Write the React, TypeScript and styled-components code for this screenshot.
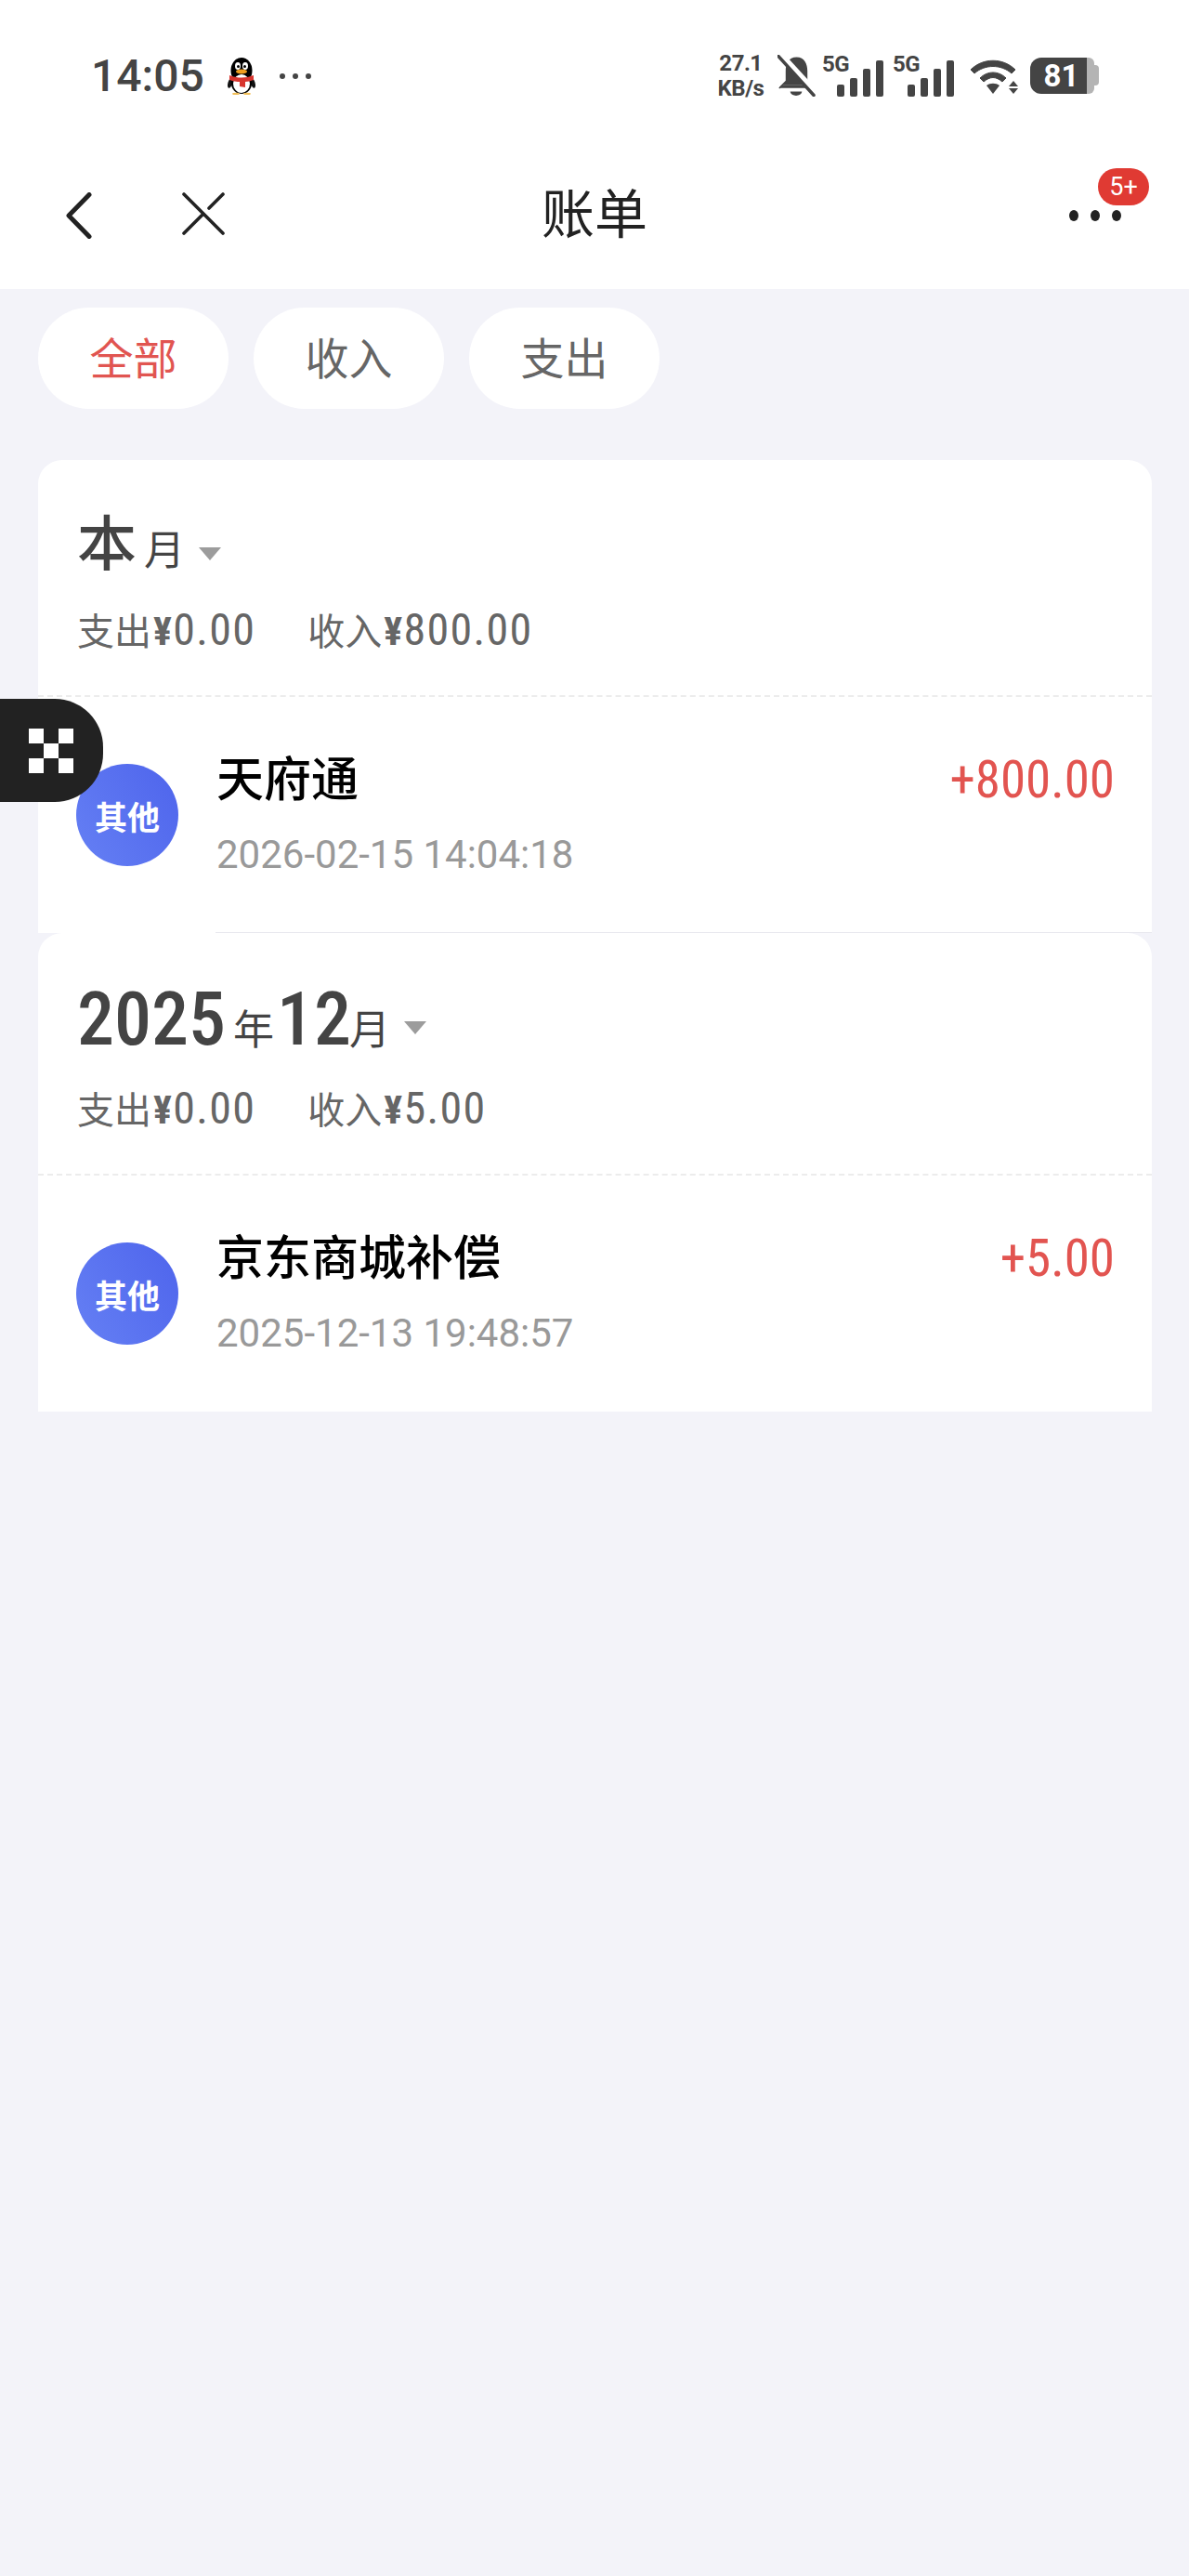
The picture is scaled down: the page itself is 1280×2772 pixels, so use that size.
import React from 'react';
import styled, { createGlobalStyle } from 'styled-components';

const FONT = `Roboto, "Noto Sans CJK SC", sans-serif`;

const GlobalStyle = createGlobalStyle`
  html, body {
    margin: 0;
    padding: 0;
    background: #f3f3f9;
  }
  * {
    box-sizing: border-box;
  }
`;

const Page = styled.div`
  position: relative;
  width: 1280px;
  min-height: 2772px;
  background: #f3f3f9;
  font-family: ${FONT};
  overflow: hidden;
`;

const Header = styled.header`
  background: #fff;
`;

const StatusBar = styled.div`
  height: 151px;
  padding: 12px 97px 0 98px;
  display: flex;
  align-items: center;
  justify-content: space-between;
`;

const StatusLeft = styled.div`
  display: flex;
  align-items: center;
`;

const Time = styled.span`
  font-size: 48px;
  font-weight: 500;
  color: #444;
  line-height: 1;
  margin-right: 24px;
`;

const MoreDots = styled.span`
  display: flex;
  gap: 8px;
  margin-left: 25px;

  i {
    width: 6px;
    height: 6px;
    border-radius: 50%;
    background: #444;
  }
`;

const StatusRight = styled.div`
  display: flex;
  align-items: center;
`;

const Speed = styled.div`
  width: 53px;
  display: flex;
  flex-direction: column;
  align-items: center;
  color: #444;
  font-weight: 700;
  font-size: 24px;
  line-height: 27px;
  margin-right: 13px;
  letter-spacing: -0.5px;
`;

const SpeedUnit = styled.span`
  font-size: 24px;
`;

const Signal = styled.div`
  position: relative;
  width: 66px;
  height: 44px;
  margin-left: 7px;
  display: flex;
  align-items: flex-end;
  justify-content: flex-end;
  gap: 6px;

  & + & {
    margin-left: 10px;
  }
`;

const SignalTag = styled.span`
  position: absolute;
  left: 0;
  top: -1px;
  font-size: 24px;
  line-height: 20px;
  font-weight: 700;
  color: #444;
  letter-spacing: -0.5px;
`;

const Bar = styled.i<{ $h: number }>`
  width: 8px;
  height: ${({ $h }) => $h}px;
  border-radius: 2px;
  background: #444;
`;

const WifiSvg = styled.svg`
  margin-left: 16px;
`;

const Battery = styled.div`
  width: 74px;
  height: 39px;
  margin-left: 12px;
  display: flex;
`;

const BatteryFill = styled.div`
  width: 61px;
  height: 39px;
  background: #444;
  border-radius: 12px 0 0 12px;
  color: #fff;
  font-size: 33px;
  font-weight: 700;
  line-height: 39px;
  text-align: center;
  padding-left: 6px;
`;

const BatteryRest = styled.div`
  width: 8px;
  height: 39px;
  background: #b4b4b4;
  border-radius: 0 6px 6px 0;
`;

const BatteryCap = styled.div`
  width: 5px;
  height: 22px;
  margin-top: 8px;
  background: #b4b4b4;
  border-radius: 0 4px 4px 0;
`;

const Nav = styled.nav`
  position: relative;
  height: 160px;
  display: flex;
  align-items: center;
  justify-content: center;
`;

const NavLeft = styled.div`
  position: absolute;
  left: 71px;
  top: 56px;
  display: flex;
  gap: 97px;
`;

const NavTitle = styled.h1`
  margin: 0;
  font-size: 57px;
  font-weight: 400;
  line-height: 1;
  color: #222;
`;

const NavMore = styled.div`
  position: absolute;
  left: 1151px;
  top: 75px;
  display: flex;
  gap: 13px;

  i {
    width: 10px;
    height: 12px;
    border-radius: 50%;
    background: #222;
  }
`;

const Badge = styled.span`
  position: absolute;
  left: 1182px;
  top: 30px;
  width: 55px;
  height: 40px;
  border-radius: 20px;
  background: #e03a33;
  color: #fff;
  font-size: 27px;
  line-height: 40px;
  text-align: center;
`;

const Tabs = styled.div`
  display: flex;
  gap: 27px;
  padding: 20px 41px 0;
  margin-bottom: 55px;
`;

const Tab = styled.div<{ $active?: boolean }>`
  width: 205px;
  height: 109px;
  padding-bottom: 6px;
  border-radius: 55px;
  background: #fff;
  display: flex;
  align-items: center;
  justify-content: center;
  font-size: 47px;
  color: ${({ $active }) => ($active ? '#e15551' : '#666')};
`;

const Card = styled.section`
  margin: 0 40px 0 41px;
  background: #fff;
  border-radius: 26px 26px 0 0;
`;

const CardHead = styled.div<{ $tall?: boolean }>`
  height: ${({ $tall }) => ($tall ? 261 : 255)}px;
  padding: ${({ $tall }) => ($tall ? 55 : 54)}px 0 0 42px;
  border-bottom: 2px dashed #ececec;
`;

const Period = styled.div`
  display: flex;
  align-items: baseline;
  height: 76px;
  color: #444;
  line-height: 76px;
`;

const PeriodBig = styled.span`
  font-size: 64px;
  font-weight: 500;
`;

const PeriodNum = styled.span`
  font-size: 80px;
  font-weight: 500;
  font-stretch: 85%;
`;

const PeriodUnit = styled.span<{ $snug?: boolean }>`
  font-size: 44px;
  margin: 0 3px 0 ${({ $snug }) => ($snug ? -2 : 8)}px;
`;

const Caret = styled.i`
  align-self: center;
  margin-left: 12px;
  margin-top: 18px;
  width: 0;
  height: 0;
  border-left: 12px solid transparent;
  border-right: 12px solid transparent;
  border-top: 14px solid #9c9c9c;
`;

const Summary = styled.div<{ $tall?: boolean }>`
  display: flex;
  gap: 56px;
  margin-top: ${({ $tall }) => ($tall ? 33 : 28)}px;
  height: 50px;
  line-height: 50px;
  color: #666;
  font-size: 40px;
`;

const Money = styled.span`
  font-size: 48px;
  font-weight: 400;
  font-stretch: 85%;
  letter-spacing: 1.3px;
  margin-left: 2px;
`;

const Yen = styled.span`
  font-weight: 700;
  font-size: 42px;
`;

const Row = styled.div`
  position: relative;
  height: 254px;
  padding: 0 40px 0 41px;
  display: flex;
  align-items: center;
`;

const RowLine = styled.div`
  position: absolute;
  left: 191px;
  right: 0;
  bottom: 0;
  height: 1px;
  background: #e8e8ee;
`;

const Avatar = styled.div`
  width: 110px;
  height: 110px;
  border-radius: 50%;
  background: linear-gradient(60deg, #6580f4, #4e64ec);
  color: #fff;
  font-size: 35px;
  font-weight: 700;
  display: flex;
  align-items: center;
  justify-content: center;
  margin-right: 41px;
  flex: none;
`;

const RowBody = styled.div`
  flex: 1;
  display: flex;
  flex-direction: column;
  gap: 21px;
  margin-top: 5px;
`;

const RowTop = styled.div`
  display: flex;
  justify-content: space-between;
  align-items: center;
  height: 60px;
`;

const RowTitle = styled.span`
  font-size: 51px;
  font-weight: 500;
  color: #000;
  margin-bottom: 8px;
`;

const Amount = styled.span`
  font-size: 55px;
  font-weight: 400;
  font-stretch: 85%;
  color: #e25450;
`;

const RowDate = styled.span`
  font-size: 42px;
  line-height: 60px;
  color: #999;
`;

const FloatButton = styled.div`
  position: absolute;
  left: 0;
  top: 752px;
  width: 111px;
  height: 111px;
  background: #222;
  border-radius: 0 52px 52px 0;
  display: flex;
  align-items: center;
  padding-left: 31px;
`;

function Penguin() {
  return (
    <svg width="32" height="40" viewBox="0 0 32 40">
      <ellipse cx="4" cy="27" rx="2.5" ry="6" fill="#111" transform="rotate(18 4 27)" />
      <ellipse cx="28" cy="27" rx="2.5" ry="6" fill="#111" transform="rotate(-18 28 27)" />
      <ellipse cx="16" cy="14" rx="11.5" ry="14" fill="#000" />
      <ellipse cx="16" cy="28" rx="11" ry="11" fill="#000" />
      <ellipse cx="16" cy="28" rx="9" ry="10" fill="#fff" />
      <ellipse cx="12" cy="9" rx="3" ry="4" fill="#fff" />
      <ellipse cx="20" cy="9" rx="3" ry="4" fill="#fff" />
      <circle cx="12.5" cy="9.5" r="1.5" fill="#000" />
      <circle cx="19.5" cy="9.5" r="1.5" fill="#000" />
      <ellipse cx="16" cy="15" rx="6" ry="2.4" fill="#f0a020" />
      <path d="M3 19 Q16 24 29 19 L29 24 Q24 26 20 26 L20 32 L14 31 L14 26 Q7 26 3 24 Z" fill="#d8352e" />
      <ellipse cx="10" cy="39" rx="4" ry="1.2" fill="#f2c05a" />
      <ellipse cx="22" cy="39" rx="4" ry="1.2" fill="#f2c05a" />
    </svg>
  );
}

function BellOff() {
  return (
    <svg width="41" height="45" viewBox="0 0 42 45">
      <path d="M21 1 C30 1 33 9 33 16 L33 26 L36 32 L6 32 L2 36 L2 34 L9 27 L9 16 C9 9 12 1 21 1 Z" fill="#444" transform="translate(0 1)" />
      <path d="M1 36 H37 L36 33 H5 Z" fill="#444" />
      <path d="M14 40 H27 C26 46 15 46 14 40 Z" fill="#444" />
      <path d="M-1 -2 L42 45" stroke="#fff" strokeWidth="6" fill="none" transform="translate(4 0)" />
      <path d="M1 1 L40 44" stroke="#444" strokeWidth="3.5" strokeLinecap="round" fill="none" />
    </svg>
  );
}

function Wifi() {
  return (
    <WifiSvg width="54" height="38" viewBox="0 0 54 38">
      <path d="M2 12 C15 -1 37 -1 50 12 L46 16 C35 6 17 6 6 16 Z" fill="#444" stroke="#444" strokeWidth="1" strokeLinejoin="round" />
      <path d="M12 21 C20 13 32 13 40 21 L36 25 C29 19 23 19 16 25 Z" fill="#444" stroke="#444" strokeWidth="1" strokeLinejoin="round" />
      <path d="M19 29 C23 26 29 26 33 29 L26 38 Z" fill="#444" />
      <path d="M48 24 L53 30 H43 Z" fill="#444" />
      <path d="M43 32 H53 L48 38 Z" fill="#444" />
    </WifiSvg>
  );
}

function BackIcon() {
  return (
    <svg width="28" height="50" viewBox="0 0 28 50">
      <path d="M25 2.5 L3 25 L25 47.5" stroke="#222" strokeWidth="5" strokeLinecap="round" strokeLinejoin="round" fill="none" />
    </svg>
  );
}

function CloseIcon() {
  return (
    <svg width="46" height="46" viewBox="0 0 46 46">
      <path d="M2 2 L44 44 M2 44 L23 23 M29 17 L44 2" stroke="#222" strokeWidth="3.6" strokeLinecap="round" fill="none" />
    </svg>
  );
}

function LogoMark() {
  return (
    <svg width="48" height="48" viewBox="0 0 48 48">
      <path d="M0 0H16V16H0Z M32 0H48V16H32Z M16 16H32V32H16Z M0 32H16V48H0Z M32 32H48V48H32Z" fill="#fff" />
    </svg>
  );
}

const BARS = [13, 20, 30, 39];

function SignalGroup() {
  return (
    <Signal>
      <SignalTag>5G</SignalTag>
      {BARS.map((h) => (
        <Bar key={h} $h={h} />
      ))}
    </Signal>
  );
}

const months = [
  {
    id: 'current',
    spend: '0.00',
    income: '800.00',
    title: '天府通',
    date: '2026-02-15 14:04:18',
    amount: '+800.00',
  },
  {
    id: '2025-12',
    spend: '0.00',
    income: '5.00',
    title: '京东商城补偿',
    date: '2025-12-13 19:48:57',
    amount: '+5.00',
  },
];

export default function App() {
  return (
    <Page>
      <GlobalStyle />
      <Header>
        <StatusBar>
          <StatusLeft>
            <Time>14:05</Time>
            <Penguin />
            <MoreDots>
              <i />
              <i />
              <i />
            </MoreDots>
          </StatusLeft>
          <StatusRight>
            <Speed>
              <span>27.1</span>
              <SpeedUnit>KB/s</SpeedUnit>
            </Speed>
            <BellOff />
            <SignalGroup />
            <SignalGroup />
            <Wifi />
            <Battery>
              <BatteryFill>81</BatteryFill>
              <BatteryRest />
              <BatteryCap />
            </Battery>
          </StatusRight>
        </StatusBar>
        <Nav>
          <NavLeft>
            <BackIcon />
            <CloseIcon />
          </NavLeft>
          <NavTitle>账单</NavTitle>
          <NavMore>
            <i />
            <i />
            <i />
          </NavMore>
          <Badge>5+</Badge>
        </Nav>
      </Header>

      <Tabs>
        <Tab $active>全部</Tab>
        <Tab>收入</Tab>
        <Tab>支出</Tab>
      </Tabs>

      {months.map((m, index) => (
        <Card key={m.id}>
          <CardHead $tall={index > 0}>
            <Period>
              {index === 0 ? (
                <>
                  <PeriodBig>本</PeriodBig>
                  <PeriodUnit>月</PeriodUnit>
                </>
              ) : (
                <>
                  <PeriodNum>2025</PeriodNum>
                  <PeriodUnit>年</PeriodUnit>
                  <PeriodNum>12</PeriodNum>
                  <PeriodUnit $snug>月</PeriodUnit>
                </>
              )}
              <Caret />
            </Period>
            <Summary $tall={index > 0}>
              <span>
                支出
                <Money>
                  <Yen>¥</Yen>
                  {m.spend}
                </Money>
              </span>
              <span>
                收入
                <Money>
                  <Yen>¥</Yen>
                  {m.income}
                </Money>
              </span>
            </Summary>
          </CardHead>
          <Row>
            <Avatar>其他</Avatar>
            <RowBody>
              <RowTop>
                <RowTitle>{m.title}</RowTitle>
                <Amount>{m.amount}</Amount>
              </RowTop>
              <RowDate>{m.date}</RowDate>
            </RowBody>
            {index === 0 && <RowLine />}
          </Row>
        </Card>
      ))}

      <FloatButton>
        <LogoMark />
      </FloatButton>
    </Page>
  );
}
